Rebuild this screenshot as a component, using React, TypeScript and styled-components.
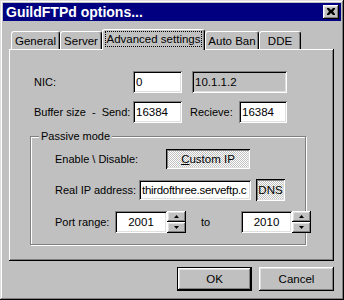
import React from 'react';
import styled, { createGlobalStyle, css } from 'styled-components';

const Global = createGlobalStyle`
  html, body { margin: 0; padding: 0; background: #c0c0c0; }
  body { font-family: "Liberation Sans", Arial, sans-serif; font-size: 11px; color: #000; }
  * { box-sizing: border-box; }
`;

const raised = css`
  box-shadow: inset -1px -1px #000, inset 1px 1px #fff, inset -2px -2px #808080, inset 2px 2px #dfdfdf;
`;
const sunken = css`
  box-shadow: inset 1px 1px #808080, inset -1px -1px #fff, inset 2px 2px #000, inset -2px -2px #dfdfdf;
`;
const dither = css`
  background: repeating-conic-gradient(#c0c0c0 0 25%, #fff 0 50%) 0 0 / 2px 2px;
`;

const Window = styled.div`
  width: 344px;
  height: 300px;
  background: #c0c0c0;
  padding: 3px;
  box-shadow: inset -1px -1px #000, inset 1px 1px #dfdfdf, inset -2px -2px #808080, inset 2px 2px #fff;
  display: flex;
  flex-direction: column;
`;

const TitleBar = styled.div`
  height: 18px;
  flex: 0 0 18px;
  background: #000080;
  color: #fff;
  display: flex;
  align-items: center;
  justify-content: space-between;
  padding: 0 2px 0 3px;
  font-weight: bold;
  font-size: 14px;
`;

const CloseBtn = styled.div`
  width: 16px;
  height: 14px;
  background: #c0c0c0;
  ${raised};
  display: flex;
  align-items: center;
  justify-content: center;
  padding-bottom: 1px;
`;

const Body = styled.div`
  flex: 1;
  display: flex;
  flex-direction: column;
  padding: 8px 7px 0 6px;
`;

const TabRow = styled.div`
  display: flex;
  align-items: flex-end;
  height: 20px;
  padding-left: 2px;
`;

const Tab = styled.div<{ $w: number; $active?: boolean }>`
  width: ${p => p.$w}px;
  height: ${p => (p.$active ? 21 : 18)}px;
  margin-bottom: ${p => (p.$active ? -1 : 0)}px;
  position: relative;
  z-index: ${p => (p.$active ? 2 : 1)};
  background: #c0c0c0;
  border-top: 1px solid #fff;
  border-left: 1px solid #fff;
  border-right: 1px solid #000;
  border-radius: 3px 3px 0 0;
  box-shadow: inset -1px 0 #808080;
  display: flex;
  justify-content: center;
  align-items: flex-start;
  padding-top: 2px;
  font-size: 11.5px;
`;

const TabLabel = styled.span<{ $focus?: boolean }>`
  padding: 0 1px;
  line-height: 14px;
  outline: ${p => (p.$focus ? '1px dotted #000' : 'none')};
`;

const Panel = styled.div`
  height: 212px;
  flex: 0 0 212px;
  background: #c0c0c0;
  box-shadow: inset -1px -1px #000, inset 1px 1px #fff, inset -2px -2px #808080;
  padding: 22px 0 0 21px;
  display: flex;
  flex-direction: column;
`;

const Row = styled.div<{ $mt?: number; $pl?: number }>`
  display: flex;
  align-items: center;
  margin-top: ${p => p.$mt || 0}px;
  padding-left: ${p => p.$pl || 0}px;
`;

const Label = styled.span<{ $w?: number; $ml?: number }>`
  width: ${p => (p.$w ? `${p.$w}px` : 'auto')};
  margin-left: ${p => p.$ml || 0}px;
  white-space: pre;
  flex: none;
  font-size: 11px;
`;

const Edit = styled.div<{ $w: number; $h?: number; $ml?: number; $center?: boolean; $ro?: boolean }>`
  width: ${p => p.$w}px;
  height: ${p => p.$h || 22}px;
  margin-left: ${p => p.$ml || 0}px;
  background: ${p => (p.$ro ? '#c0c0c0' : '#fff')};
  ${sunken};
  display: flex;
  align-items: center;
  justify-content: ${p => (p.$center ? 'center' : 'flex-start')};
  padding: 0 3px;
  font-size: 11.5px;
  white-space: nowrap;
  overflow: hidden;
  flex: none;
`;

const EditText = styled.span<{ $tight?: boolean }>`
  letter-spacing: ${p => (p.$tight ? '-0.3px' : '0')};
`;

const ToggleBtn = styled.div<{ $w: number; $h?: number; $ml?: number }>`
  width: ${p => p.$w}px;
  height: ${p => p.$h || 20}px;
  margin-left: ${p => p.$ml || 0}px;
  ${dither};
  box-shadow: inset 1px 1px #000, inset -1px -1px #fff, inset 2px 2px #808080, inset -2px -2px #dfdfdf;
  display: flex;
  align-items: center;
  justify-content: center;
  font-size: 11.5px;
  flex: none;
  u { text-decoration: underline; text-underline-offset: 1px; }
`;

const Group = styled.div`
  position: relative;
  margin-top: 13px;
  width: 276px;
  height: 109px;
  border: 1px solid #808080;
  box-shadow: inset 1px 1px #fff, 1px 1px #fff;
  padding: 12px 0 0 24px;
  display: flex;
  flex-direction: column;
`;

const GroupLabel = styled.span`
  position: absolute;
  top: -8px;
  left: 8px;
  background: #c0c0c0;
  padding: 0 2px;
  font-size: 11px;
  line-height: 14px;
`;

const Spinner = styled.div`
  width: 19px;
  height: 22px;
  display: flex;
  flex-direction: column;
  flex: none;
`;

const SpinBtn = styled.div`
  flex: 1;
  background: #c0c0c0;
  ${raised};
  display: flex;
  align-items: center;
  justify-content: center;
`;

const ButtonRow = styled.div`
  display: flex;
  justify-content: flex-end;
  gap: 7px;
  margin-top: 6px;
`;

const PushButton = styled.div<{ $default?: boolean }>`
  width: 75px;
  height: 24px;
  background: #c0c0c0;
  display: flex;
  align-items: center;
  justify-content: center;
  font-size: 11.5px;
  ${p =>
    p.$default
      ? css`
          box-shadow: inset 0 0 0 1px #000, inset -2px -2px #000, inset 2px 2px #fff, inset -3px -3px #808080,
            inset 3px 3px #dfdfdf;
        `
      : raised}
`;

const Arrow = ({ up }: { up?: boolean }) => (
  <svg width="5" height="3" viewBox="0 0 5 3">
    <polygon points={up ? '2.5,0 5,3 0,3' : '0,0 5,0 2.5,3'} fill="#000" />
  </svg>
);

const SpinBox = () => (
  <Spinner>
    <SpinBtn>
      <Arrow up />
    </SpinBtn>
    <SpinBtn>
      <Arrow />
    </SpinBtn>
  </Spinner>
);

export default function App() {
  return (
    <>
      <Global />
      <Window>
        <TitleBar>
          <span>GuildFTPd options...</span>
          <CloseBtn>
            <svg width="8" height="7" viewBox="0 0 8 7">
              <path d="M0 0h2l2 2 2-2h2v1L6 3.5 8 6v1H6L4 5 2 7H0V6l2-2.5L0 1z" fill="#000" />
            </svg>
          </CloseBtn>
        </TitleBar>
        <Body>
          <TabRow>
            <Tab $w={49}><TabLabel>General</TabLabel></Tab>
            <Tab $w={42}><TabLabel>Server</TabLabel></Tab>
            <Tab $w={103} $active><TabLabel $focus>Advanced settings</TabLabel></Tab>
            <Tab $w={54}><TabLabel>Auto Ban</TabLabel></Tab>
            <Tab $w={42}><TabLabel>DDE</TabLabel></Tab>
          </TabRow>
          <Panel>
            <Row $pl={4}>
              <Label $w={99}>NIC:</Label>
              <Edit $w={49}>0</Edit>
              <Edit $w={95} $ml={10} $ro>10.1.1.2</Edit>
            </Row>
            <Row $pl={4} $mt={8}>
              <Label $w={99}>{'Buffer size  -  Send:'}</Label>
              <Edit $w={49}>16384</Edit>
              <Label $w={49} $ml={8}>Recieve:</Label>
              <Edit $w={48}>16384</Edit>
            </Row>
            <Group>
              <GroupLabel>Passive mode</GroupLabel>
              <Row>
                <Label $w={111}>{'Enable \\ Disable:'}</Label>
                <ToggleBtn $w={84}>
                  <span><u>C</u>ustom IP</span>
                </ToggleBtn>
              </Row>
              <Row $mt={10}>
                <Label $w={84}>Real IP address:</Label>
                <Edit $w={112} $h={20}>
                  <EditText $tight>thirdofthree.serveftp.c</EditText>
                </Edit>
                <ToggleBtn $w={29} $h={22} $ml={5}>DNS</ToggleBtn>
              </Row>
              <Row $mt={10}>
                <Label $w={60}>Port range:</Label>
                <Edit $w={52} $center>2001</Edit>
                <SpinBox />
                <Label $w={40} $ml={15}>to</Label>
                <Edit $w={51} $center>2010</Edit>
                <SpinBox />
              </Row>
            </Group>
          </Panel>
          <ButtonRow>
            <PushButton $default>OK</PushButton>
            <PushButton>Cancel</PushButton>
          </ButtonRow>
        </Body>
      </Window>
    </>
  );
}
